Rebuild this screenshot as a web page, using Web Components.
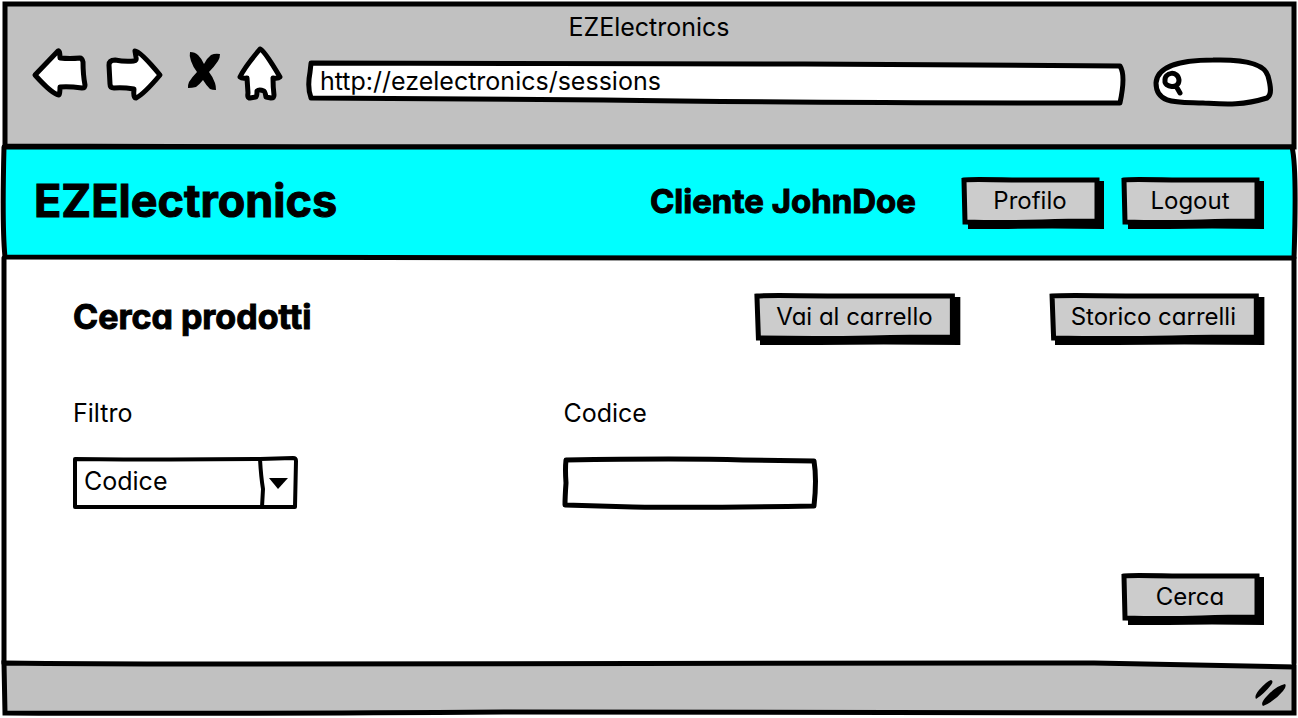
<!DOCTYPE html>
<html lang="it">
<head>
<meta charset="utf-8">
<meta name="viewport" content="width=device-width, initial-scale=1">
<title>EZElectronics</title>
<style>
  body {
    margin: 0;
    background: #fff;
    color: #000;
    font-family: Inter, "Liberation Sans", sans-serif;
    font-feature-settings: "cv11", "ss03";
    font-size: 25px;
    line-height: 32px;
    --chrome: #c1c1c1;
    --button: #ccc;
    --accent: #0ff;
    --ink: #000;
  }
</style>
</head>
<body>
<sketch-window heading="EZElectronics" url="http://ezelectronics/sessions">
  <app-banner slot="banner" name="EZElectronics" user="Cliente JohnDoe">
    <sketch-button>Profilo</sketch-button>
    <sketch-button>Logout</sketch-button>
  </app-banner>
  <product-search></product-search>
</sketch-window>

<script>
  // Hand-drawn outline that stretches with its box while the pen keeps its width.
  const outline = (w, h, shapes, name = "") =>
    `<span class="outline ${name}"><svg viewBox="0 0 ${w} ${h}" preserveAspectRatio="none" aria-hidden="true">${shapes}</svg></span>`;

  const shared = `
    *, *::before, *::after { box-sizing: border-box; }
    .outline { position: absolute; inset: 0; pointer-events: none; }
    .outline svg { display: block; width: 100%; height: 100%; overflow: visible; }
    .outline path { fill: none; stroke: var(--ink); stroke-width: 5px; stroke-linejoin: round; stroke-linecap: round; vector-effect: non-scaling-stroke; }
    .outline .solid { fill: var(--ink); stroke: none; }
    button, input, select { font: inherit; font-feature-settings: inherit; color: inherit; background: none; border: 0; margin: 0; border-radius: 0; }
    :focus-visible { outline: 2px dashed #0050d0; outline-offset: 2px; }
    h1, h2, .user { -webkit-text-stroke: 1px currentColor; }
  `;

  class SketchElement extends HTMLElement {
    connectedCallback() {
      if (this.shadowRoot) return;
      this.attachShadow({ mode: "open" }).innerHTML = `<style>${shared}</style>` + this.render();
    }
  }

  customElements.define("sketch-button", class extends SketchElement {
    render() {
      return `
        <style>
          :host { display: inline-block; font-size: 24px; }
          button { position: relative; display: block; min-width: 142px; height: 52px; padding: 0 28px 4px 22px; cursor: pointer; white-space: nowrap; }
          .label { position: relative; }
          .outline.shadow { inset: 4px 0 0 6px; }
          .outline.face { inset: 0 5px 4px 0; }
          .face path { fill: var(--button); stroke-linejoin: miter; }
        </style>
        <button type="button">
          ${outline(136, 48, `<path class="solid" d="M0 0 H136 V48 Q80 47 40 48 H0 Z"/>`, "shadow")}
          ${outline(137, 48, `<path d="M2 3 Q8 2 50 3 L135 3 V44 Q105 44 80 45 Q40 46 3 45 Z"/>`, "face")}
          <span class="label"><slot></slot></span>
        </button>`;
    }
  });

  const toolIcons = {
    back: [56, `<path d="M3 29 L26 5 Q28 4 28 12 Q38 13 48 12 Q50 12 51 16 Q51 29 53 39 Q53 42 50 42 Q36 40 28 41 Q28 47 27 49 Q20 48 3 29 Z"/>`],
    forward: [58, `<path d="M3 19 Q3 14 9 14 Q19 16 28 15 Q31 15 30 11 L29 5 Q34 5 54 29 Q38 48 30 52 Q27 52 28 43 Q16 41 8 42 Q4 42 4 38 Z"/>`],
    stop: [38, `<path class="solid" d="M8 6 Q13 6 16 9 Q20 13 22 18 Q25 12 29 9 Q33 7 38 8 Q38 12 36 15 Q32 21 27 26 Q31 31 33 37 Q34 40 34 44 Q30 44 28 43 Q24 39 21 34 Q17 39 14 41 Q10 42 6 42 Q6 38 7 36 Q11 30 15 26 Q11 21 9 15 Q7 10 8 6 Z"/>`],
    home: [46, `<path d="M22 3 Q26 4 42 31 Q40 33 35 32 Q35 41 36 49 Q36 52 33 52 L28 51 Q27 45 26 45 Q21 43 19 45 Q19 51 18 51 L12 52 Q9 52 10 47 L9 32 Q4 33 2 31 Q6 22 22 3 Z"/>`]
  };

  customElements.define("tool-button", class extends SketchElement {
    render() {
      const [width, shape] = toolIcons[this.getAttribute("icon")];
      return `
        <style>
          :host { display: block; }
          button { display: block; padding: 0; cursor: pointer; }
          svg { display: block; overflow: visible; }
          path { fill: #fff; stroke: var(--ink); stroke-width: 5px; stroke-linejoin: round; }
          .solid { fill: var(--ink); stroke: none; }
        </style>
        <button type="button" aria-label="${this.getAttribute("label")}">
          <svg width="${width}" height="56" viewBox="0 0 ${width} 56" aria-hidden="true">${shape}</svg>
        </button>`;
    }
  });

  customElements.define("sketch-window", class extends SketchElement {
    render() {
      return `
        <style>
          :host { display: flex; flex-direction: column; box-sizing: border-box; min-height: 100vh; padding: 4px 4px 5px; }
          header { position: relative; height: 143px; }
          .outline .chrome { fill: var(--chrome); stroke-linejoin: miter; }
          .title { position: relative; padding-top: 7px; text-align: center; }
          nav { position: relative; display: flex; align-items: flex-start; gap: 18px; padding: 3px 20px 0 28px; }
          .field { position: relative; margin-top: 14px; }
          .url { flex: 1; min-width: 0; height: 46px; }
          .search { width: 120px; height: 50px; margin-left: 8px; margin-top: 11px; }
          .field input { position: relative; display: block; width: 100%; height: 100%; padding: 0 18px 4px; }
          .search input { padding-left: 32px; }
          main { position: relative; flex: 1; }
          footer { position: relative; display: flex; justify-content: flex-end; align-items: center; height: 50px; padding: 6px 8px 0 0; }
          footer > svg { position: relative; display: block; }
        </style>
        <header>
          ${outline(1290, 143, `<path class="chrome" d="M1 0 H1290 V143 Q600 144 300 143 Q100 142 1 142 Z"/>`)}
          <div class="title">${this.getAttribute("heading")}</div>
          <nav aria-label="Browser">
            <tool-button icon="back" label="Indietro"></tool-button>
            <tool-button icon="forward" label="Avanti"></tool-button>
            <tool-button icon="stop" label="Interrompi"></tool-button>
            <tool-button icon="home" label="Pagina iniziale"></tool-button>
            <div class="field url">
              ${outline(822, 46, `<path style="fill:#fff" d="M9 3 Q300 4 500 4 Q680 5 814 6 Q820 15 814 43 Q500 43 300 40 L9 38 Q5 28 8 12 Z"/>`)}
              <input type="text" aria-label="Indirizzo" value="${this.getAttribute("url")}">
            </div>
            <div class="field search">
              ${outline(120, 50, `<path style="fill:#fff" d="M2 26 C3 10 25 3 59 3 C95 2 111 8 114 19 C117 30 118 38 113 41 C87 49 69 47 49 46 C25 45 2 48 2 26 Z"/>
                <path d="M11 24 C10 15 24 13 25 23 C25 33 10 30 11 24 M22 29 L26 36"/>`)}
              <input type="text" aria-label="Cerca nel browser">
            </div>
          </nav>
        </header>
        <slot name="banner"></slot>
        <main>
          ${outline(1290, 405, `<path d="M0 0 V405 M1290 0 V405"/>`)}
          <slot></slot>
        </main>
        <footer>
          ${outline(1290, 50, `<path class="chrome" d="M0 0 Q80 1 200 1 Q900 0 1090 0 Q1200 2 1290 4 V50 Q700 49 500 49 Q200 51 1 50 Z"/>`)}
          <svg width="32" height="32" viewBox="0 0 32 32" aria-hidden="true">
            <path d="M2 24 Q0 21 5 15 Q13 6 17 5 Q20 6 17 10 Q10 19 2 24 Z M9 31 Q6 28 13 21 Q22 11 31 9 Q33 11 29 16 Q21 26 9 31 Z"/>
          </svg>
        </footer>`;
    }
  });

  customElements.define("app-banner", class extends SketchElement {
    render() {
      return `
        <style>
          :host { position: relative; z-index: 1; display: flex; align-items: center; box-sizing: border-box; height: 111px; padding: 0 30px 0 30px; }
          h1, .user { position: relative; margin: 0; padding-bottom: 4px; font-weight: 700; white-space: nowrap; }
          h1 { flex: 1; font-size: 45px; line-height: 56px; }
          .user { margin-right: 46px; font-size: 33px; line-height: 44px; }
          .actions { position: relative; display: flex; gap: 18px; }
        </style>
        ${outline(1290, 111, `<path style="fill: var(--accent)" d="M0 0 H1288 Q1293 20 1290 111 Q1000 110 700 111 Q300 111 1 110 Q-2 80 0 0 Z"/>`)}
        <h1>${this.getAttribute("name")}</h1>
        <div class="user">${this.getAttribute("user")}</div>
        <div class="actions"><slot></slot></div>`;
    }
  });

  customElements.define("product-search", class extends SketchElement {
    render() {
      return `
        <style>
          :host { position: relative; display: block; padding: 35px 30px 32px 69px; }
          .heading { display: flex; align-items: center; gap: 88px; }
          h2 { flex: 1; margin: 0; padding-bottom: 4px; font-size: 34px; line-height: 44px; }
          form { margin-top: 52px; }
          .fields { display: grid; grid-template-columns: 7fr 10fr; }
          label { display: block; margin-bottom: 28px; }
          .control { position: relative; height: 52px; }
          .select { width: 225px; }
          .text { width: 254px; }
          .control > select, .control > input { position: relative; display: block; width: 100%; height: 100%; padding: 0 44px 4px 11px; appearance: none; }
          .control > input { padding-right: 11px; }
          .actions { display: flex; justify-content: flex-end; margin-top: 64px; }
        </style>
        <div class="heading">
          <h2>Cerca prodotti</h2>
          <sketch-button>Vai al carrello</sketch-button>
          <sketch-button>Storico carrelli</sketch-button>
        </div>
        <form>
          <div class="fields">
            <div>
              <label for="filter">Filtro</label>
              <div class="control select">
                ${outline(225, 52, `<path style="stroke-width:4px" d="M2 2 Q100 3 187 2 L220 1 Q223 1 223 4 L222 50 H2 Z M187 2 Q188 20 190 32 L189 50"/>
                  <path class="solid" d="M196 21 L215 21 L205 32 Z"/>`)}
                <select id="filter"><option>Codice</option></select>
              </div>
            </div>
            <div>
              <label for="code">Codice</label>
              <div class="control text">
                ${outline(254, 52, `<path d="M3 3 Q120 1 180 3 L251 4 Q254 22 251 49 Q140 51 70 50 L2 48 Q2 40 3 26 Q2 12 3 3 Z"/>`)}
                <input id="code" type="text">
              </div>
            </div>
          </div>
          <div class="actions"><sketch-button>Cerca</sketch-button></div>
        </form>`;
    }
  });
</script>
</body>
</html>
